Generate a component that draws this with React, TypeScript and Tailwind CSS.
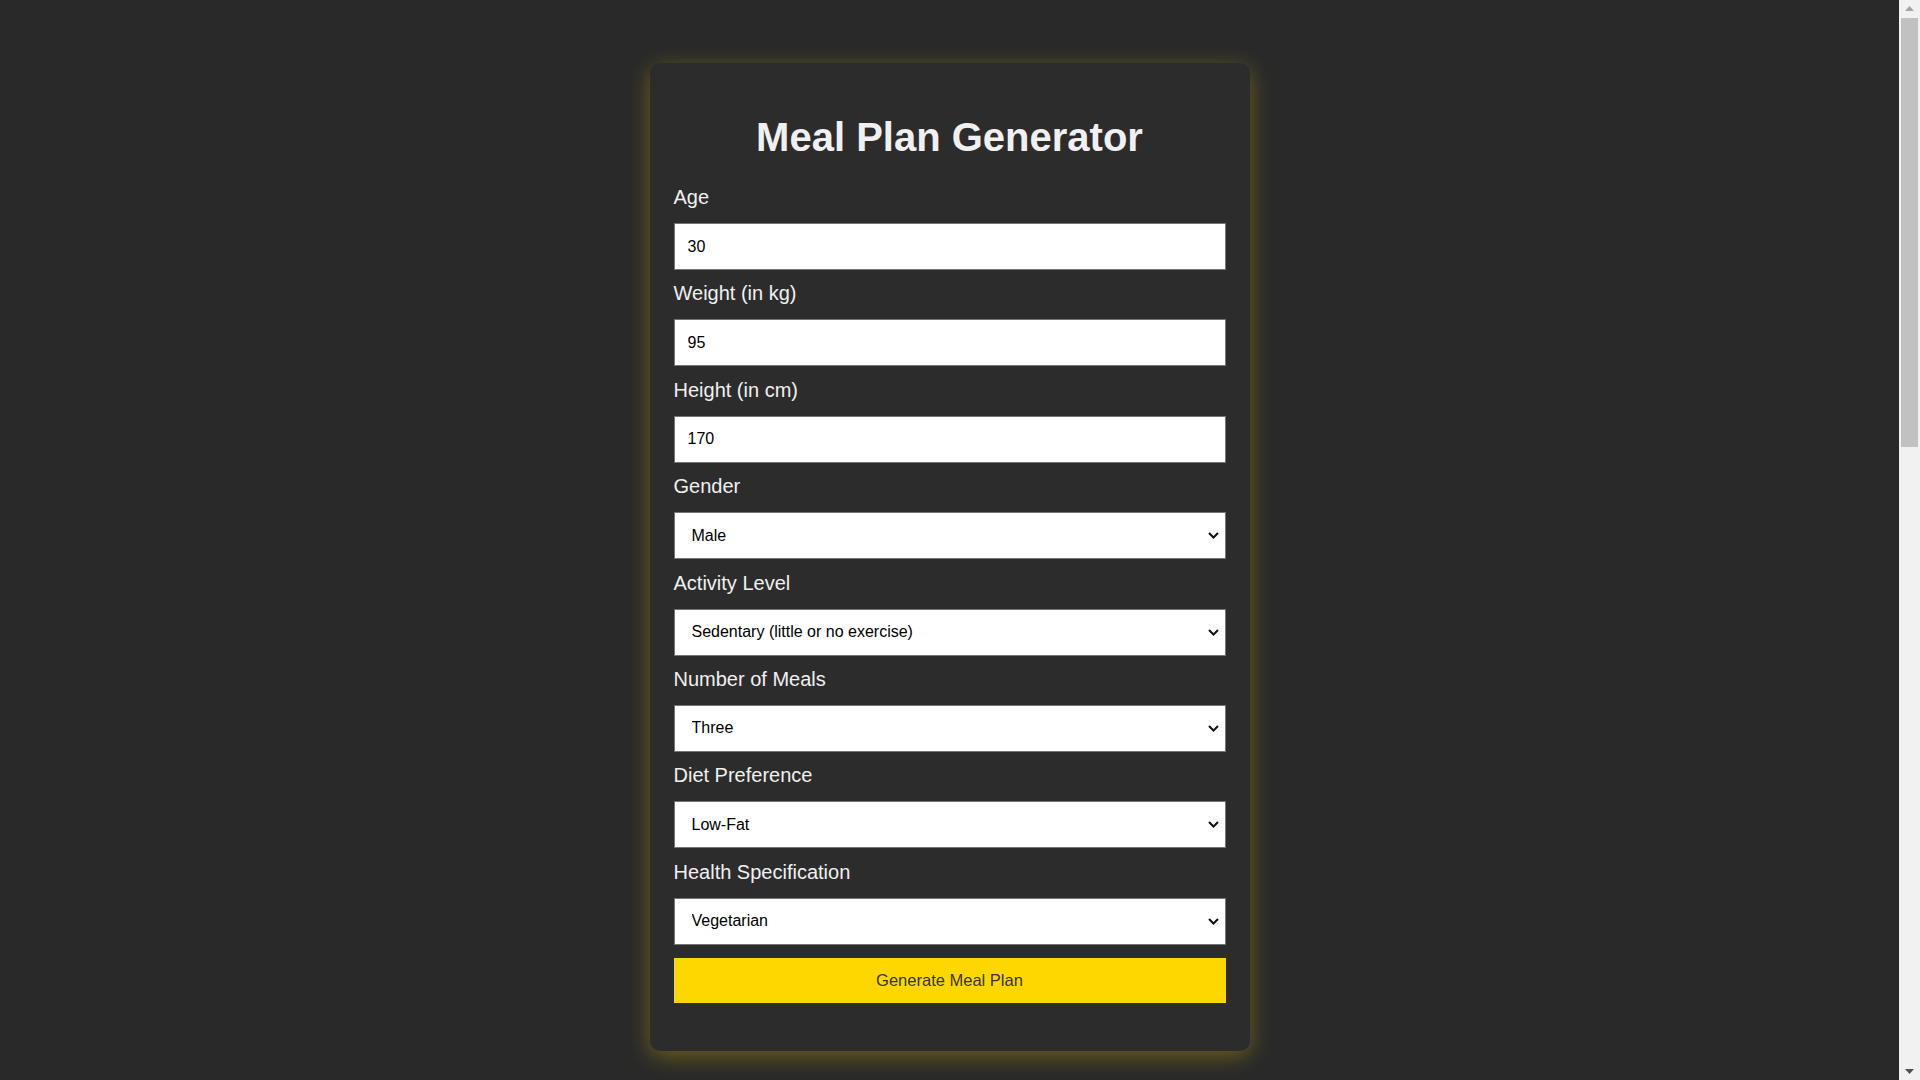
import React, { useState } from "react";

interface FieldProps {
  label: string;
  children: React.ReactNode;
}

const Field: React.FC<FieldProps> = ({ label, children }) => (
  <div className="mb-[12.4px]">
    <label className="block text-[20px] leading-[23px] text-[#f0f0f0] mb-[14px]">
      {label}
    </label>
    {children}
  </div>
);

const inputClass =
  "block w-full h-[47px] px-[13px] bg-white text-black text-[16px] border border-[#767676] rounded-none outline-none";

interface Option {
  value: string;
  text: string;
}

interface SelectProps {
  value: string;
  options: Option[];
  onChange: (v: string) => void;
}

const Select: React.FC<SelectProps> = ({ value, options, onChange }) => (
  <div className="relative">
    <select
      className="block w-full h-[47px] pl-[17px] pr-[32px] bg-white text-black text-[16px] border border-[#767676] rounded-none outline-none appearance-none"
      value={value}
      onChange={(e) => onChange(e.target.value)}
    >
      {options.map((o) => (
        <option key={o.value} value={o.value}>
          {o.text}
        </option>
      ))}
    </select>
    <svg
      className="absolute right-[7px] top-[20px] pointer-events-none"
      width="11"
      height="7"
      viewBox="0 0 11 7"
    >
      <path
        d="M1 1 L5.5 5.5 L10 1"
        fill="none"
        stroke="#111"
        strokeWidth="2"
      />
    </svg>
  </div>
);

// page scrollbar as drawn by the browser in the screenshot
const ScrollBar = () => (
  <div className="w-[21px] h-full bg-[#f1f1f1] flex flex-col items-center shrink-0">
    <div className="h-[17px] flex items-center justify-center">
      <svg width="9" height="5" viewBox="0 0 9 5">
        <path d="M0 5 L4.5 0 L9 5 Z" fill="#a3a3a3" />
      </svg>
    </div>
    <div className="w-[17px] h-[429px] mt-[1px] bg-[#c1c1c1]" />
    <div className="flex-1" />
    <div className="h-[17px] flex items-center justify-center">
      <svg width="9" height="5" viewBox="0 0 9 5">
        <path d="M0 0 L9 0 L4.5 5 Z" fill="#505050" />
      </svg>
    </div>
  </div>
);

const App = () => {
  const [age, setAge] = useState("30");
  const [weight, setWeight] = useState("95");
  const [height, setHeight] = useState("170");
  const [gender, setGender] = useState("male");
  const [activity, setActivity] = useState("sedentary");
  const [meals, setMeals] = useState("3");
  const [diet, setDiet] = useState("low-fat");
  const [health, setHealth] = useState("vegetarian");

  const opts = (list: string[][]): Option[] =>
    list.map(([value, text]) => ({ value, text }));

  const selects = [
    {
      label: "Gender",
      value: gender,
      set: setGender,
      options: opts([
        ["male", "Male"],
        ["female", "Female"],
      ]),
    },
    {
      label: "Activity Level",
      value: activity,
      set: setActivity,
      options: opts([
        ["sedentary", "Sedentary (little or no exercise)"],
        ["light", "Lightly active (light exercise 1-3 days/week)"],
        ["moderate", "Moderately active (moderate exercise 3-5 days/week)"],
        ["very", "Very active (hard exercise 6-7 days/week)"],
      ]),
    },
    {
      label: "Number of Meals",
      value: meals,
      set: setMeals,
      options: opts([
        ["2", "Two"],
        ["3", "Three"],
        ["4", "Four"],
        ["5", "Five"],
      ]),
    },
    {
      label: "Diet Preference",
      value: diet,
      set: setDiet,
      options: opts([
        ["low-fat", "Low-Fat"],
        ["low-carb", "Low-Carb"],
        ["high-protein", "High-Protein"],
        ["balanced", "Balanced"],
      ]),
    },
    {
      label: "Health Specification",
      value: health,
      set: setHealth,
      options: opts([
        ["vegetarian", "Vegetarian"],
        ["vegan", "Vegan"],
        ["gluten-free", "Gluten-Free"],
        ["none", "None"],
      ]),
    },
  ];

  return (
    <div
      className="h-[1080px] flex bg-[#292929] overflow-hidden"
      style={{ fontFamily: '"Liberation Sans", Arial, sans-serif' }}
    >
      <div className="flex-1 h-full overflow-hidden pt-[63px]">
        <div className="w-[600px] mx-auto bg-[#2c2c2c] rounded-[10px] px-[24px] pt-[24px] pb-[24px] shadow-[0_5px_22px_rgba(255,215,0,0.32)]">
          <h1 className="text-[40px] leading-[46px] font-bold text-[#f0f0f0] text-center mt-[27px] mb-[26px]">
            Meal Plan Generator
          </h1>
          <form onSubmit={(e) => e.preventDefault()}>
            <Field label="Age">
              <input
                type="number"
                className={inputClass}
                value={age}
                onChange={(e) => setAge(e.target.value)}
              />
            </Field>
            <Field label="Weight (in kg)">
              <input
                type="number"
                className={inputClass}
                value={weight}
                onChange={(e) => setWeight(e.target.value)}
              />
            </Field>
            <Field label="Height (in cm)">
              <input
                type="number"
                className={inputClass}
                value={height}
                onChange={(e) => setHeight(e.target.value)}
              />
            </Field>
            {selects.map((s) => (
              <Field key={s.label} label={s.label}>
                <Select value={s.value} options={s.options} onChange={s.set} />
              </Field>
            ))}
            <button
              type="submit"
              className="block w-full h-[45px] mt-[13px] mb-[24px] bg-[#ffd700] text-[#333] text-[16.5px] cursor-pointer"
            >
              Generate Meal Plan
            </button>
          </form>
        </div>
      </div>
      <ScrollBar />
    </div>
  );
};

export default App;
